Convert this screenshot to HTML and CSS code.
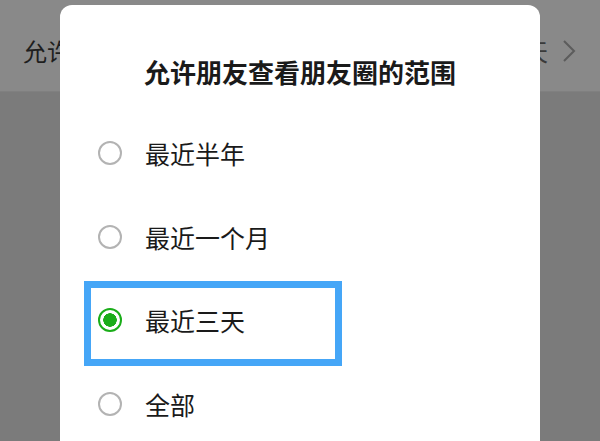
FILE: index.html
```html
<!DOCTYPE html>
<html lang="zh">
<head>
<meta charset="utf-8">
<link rel="stylesheet" href="styles.css">
</head>
<body>
<div class="page">
  <div class="setting-row">
    <span class="setting-label">允许朋友查看朋友圈的范围</span>
    <span class="setting-value">最近三天
      <svg class="chev" width="14" height="24" viewBox="0 0 14 24"><path d="M2 2 L12 12 L2 22" fill="none" stroke="#5c5c5c" stroke-width="2"/></svg>
    </span>
  </div>
  <div class="page-rest"></div>
</div>
<div class="dialog">
  <div class="dialog-title">允许朋友查看朋友圈的范围</div>
  <ul class="options">
    <li class="option"><span class="radio"></span><span class="opt-text">最近半年</span></li>
    <li class="option"><span class="radio"></span><span class="opt-text">最近一个月</span></li>
    <li class="option selected"><span class="radio"></span><span class="opt-text">最近三天</span><span class="highlight"></span></li>
    <li class="option"><span class="radio"></span><span class="opt-text">全部</span></li>
  </ul>
</div>
</body>
</html>
```
FILE: styles.css
```css
html, body {
  margin: 0;
  padding: 0;
}
body {
  width: 600px;
  height: 441px;
  overflow: hidden;
  background: #7b7b7b;
  font-family: "Noto Sans CJK SC", "Noto Sans", sans-serif;
  position: relative;
}
.page {
  display: flex;
  flex-direction: column;
}
.setting-row {
  height: 92px;
  box-sizing: border-box;
  background: #898989;
  display: flex;
  align-items: center;
  justify-content: space-between;
  padding: 10px 24px 0 23px;
  border-bottom: 1px solid #808080;
}
.setting-label {
  font-size: 24px;
  color: #1e1e1e;
}
.setting-value {
  display: flex;
  align-items: center;
  gap: 14px;
  font-size: 24px;
  color: #3a3a3a;
}
.chev {
  display: block;
}
.dialog {
  position: absolute;
  left: 60px;
  top: 5px;
  width: 480px;
  height: 470px;
  background: #ffffff;
  border-radius: 12px;
  box-sizing: border-box;
  padding-top: 50px;
}
.dialog-title {
  text-align: center;
  font-size: 26px;
  line-height: 34px;
  font-weight: 700;
  color: #1a1a1a;
}
.options {
  list-style: none;
  margin: 22px 0 0;
  padding: 0;
}
.option {
  position: relative;
  height: 83.7px;
  display: flex;
  align-items: center;
  padding-left: 38px;
}
.radio {
  width: 24px;
  height: 24px;
  box-sizing: border-box;
  border: 2px solid #b3b3b3;
  border-radius: 50%;
  flex: none;
}
.selected .radio {
  border: 2.5px solid #1aad19;
  background: radial-gradient(circle, #1aad19 0 6.5px, #ffffff 7px);
}
.opt-text {
  margin-left: 23px;
  font-size: 25px;
  color: #1a1a1a;
}
.highlight {
  position: absolute;
  left: 24px;
  top: 3px;
  width: 258px;
  height: 85px;
  box-sizing: border-box;
  border: 7px solid #45a6f7;
}
```
